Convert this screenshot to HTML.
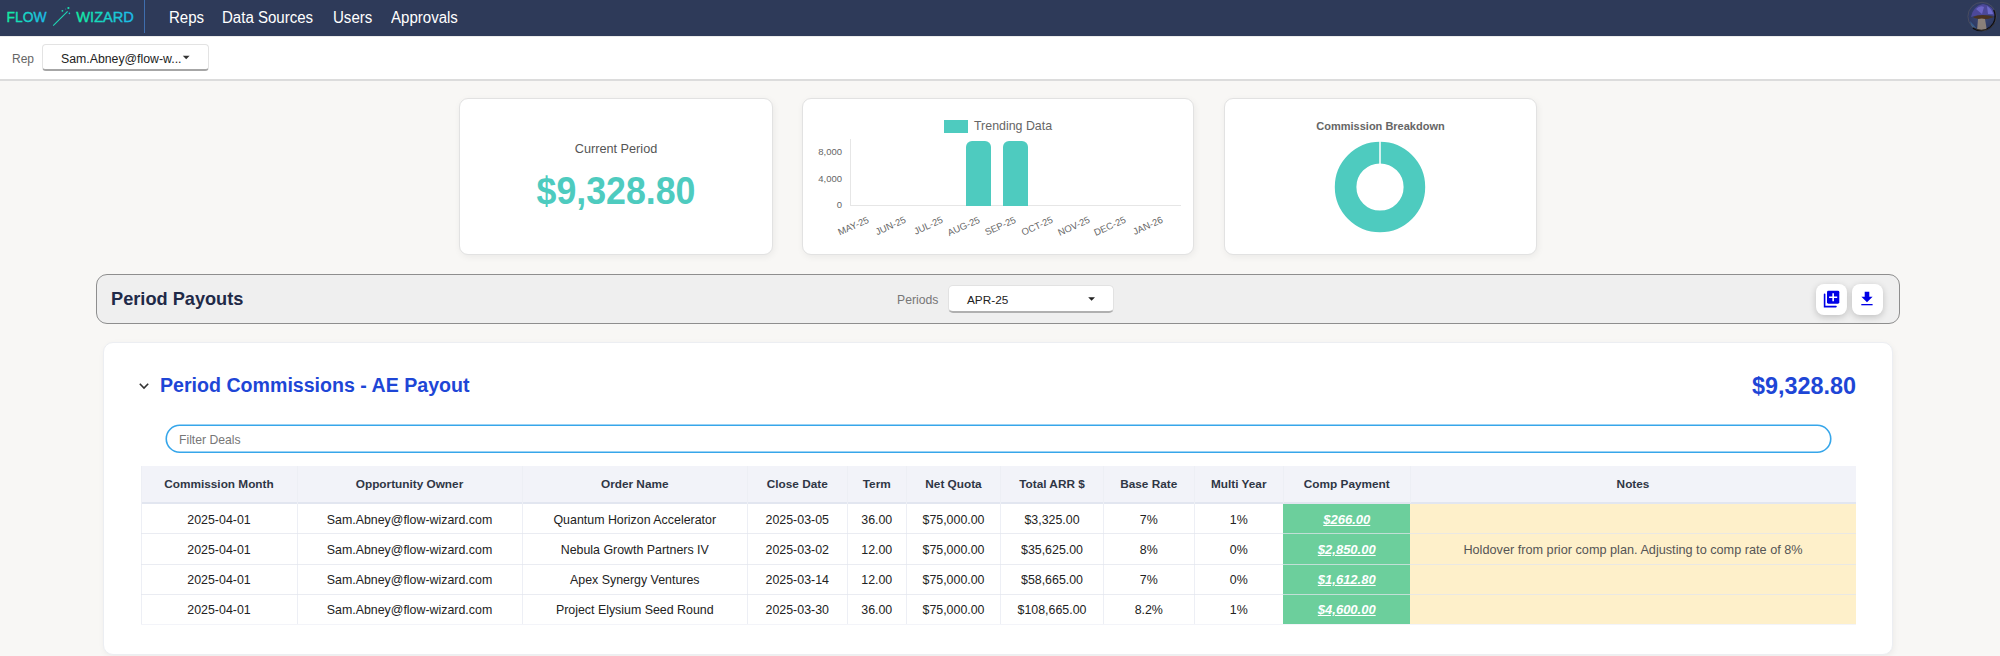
<!DOCTYPE html>
<html><head><meta charset="utf-8">
<style>
*{box-sizing:border-box;margin:0;padding:0}
html,body{width:2000px;height:656px;overflow:hidden}
body{background:#f8f7f5;font-family:"Liberation Sans",sans-serif;position:relative;color:#222}
.abs{position:absolute;white-space:nowrap}
#nav{position:absolute;left:0;top:0;width:2000px;height:36px;background:#2e3a59}
.logo{position:absolute;top:9px;font-size:14.5px;letter-spacing:0.2px;background:linear-gradient(90deg,#16eaa0,#1cb4ec);-webkit-background-clip:text;background-clip:text;color:transparent;line-height:16px}
.navlink{position:absolute;top:9px;font-size:16px;color:#fff;line-height:18px;transform:scaleX(.94);transform-origin:0 0}
#sub{position:absolute;left:0;top:36px;width:2000px;height:45px;background:#fff;border-bottom:2px solid #dcdcdc}
.card{position:absolute;background:#fff;border:1px solid #e2e2e2;border-radius:9px;box-shadow:1px 2px 7px rgba(0,0,0,.06)}
.th{top:477px;text-align:center;font-size:11.8px;font-weight:bold;color:#2f3645;line-height:14px}
.td{text-align:center;font-size:12.4px;color:#222;line-height:14px}
.pay{color:#fff;font-weight:bold;font-style:italic;text-decoration:underline;font-size:13px}
.note{color:#555;font-size:12.7px}
</style></head><body>
<div id="nav">
  <svg class="abs" style="left:0;top:0" width="145" height="36" viewBox="0 0 145 36">
    <defs>
      <linearGradient id="lg1" gradientUnits="userSpaceOnUse" x1="7" y1="0" x2="47" y2="0"><stop offset="0" stop-color="#12eea0"/><stop offset="1" stop-color="#1cb8f0"/></linearGradient>
      <linearGradient id="lg2" gradientUnits="userSpaceOnUse" x1="76" y1="0" x2="134" y2="0"><stop offset="0" stop-color="#12eea0"/><stop offset="1" stop-color="#1cb8f0"/></linearGradient>
    </defs>
    <text x="6.6" y="21.8" font-family="Liberation Sans" font-size="14.6" fill="url(#lg1)" stroke="url(#lg1)" stroke-width="0.35" textLength="40" lengthAdjust="spacingAndGlyphs">FLOW</text>
    <text x="76.3" y="21.8" font-family="Liberation Sans" font-size="14.6" fill="url(#lg2)" stroke="url(#lg2)" stroke-width="0.35" textLength="57.6" lengthAdjust="spacingAndGlyphs">WIZARD</text>
  </svg>
  <svg class="abs" style="left:50px;top:5px" width="24" height="24" viewBox="0 0 24 24">
    <line x1="3.2" y1="20.6" x2="17.6" y2="6.4" stroke="#1fd8b4" stroke-width="1.1"/>
    <circle cx="12.4" cy="5.8" r="0.9" fill="#1de0b0"/>
    <circle cx="18.4" cy="3" r="1.1" fill="#1de0b0"/>
    <circle cx="19.4" cy="8.4" r="0.8" fill="#1cc4d8"/>
    <circle cx="15.6" cy="4" r="0.6" fill="#3a7a9a"/>
  </svg>
  <div class="abs" style="left:144px;top:0;width:1px;height:33px;background:#3f6eae"></div>
  <div class="navlink" style="left:169px">Reps</div>
  <div class="navlink" style="left:222px">Data Sources</div>
  <div class="navlink" style="left:333px">Users</div>
  <div class="navlink" style="left:391px">Approvals</div>
  <svg class="abs" style="left:1966px;top:1px" width="32" height="32" viewBox="0 0 32 32">
  <defs><clipPath id="avc"><circle cx="16" cy="15.4" r="14.3"/></clipPath>
  <radialGradient id="avg" cx="50%" cy="45%" r="60%"><stop offset="0" stop-color="#3e4a78"/><stop offset="1" stop-color="#263258"/></radialGradient></defs>
  <g clip-path="url(#avc)">
    <rect x="0" y="0" width="32" height="32" fill="url(#avg)"/>
    <path d="M5 16 Q7 5 17 3 Q27 4 29 15 Q22 13 16 14 Q10 14 5 16Z" fill="#4c4898"/>
    <path d="M10 8 Q14 4 18 6 L16 13Z" fill="#7a72d8" opacity=".7"/>
    <path d="M21 5 Q26 8 27 13 L22 13Z" fill="#7a7ae0" opacity=".7"/>
    <path d="M7 16 Q16 12 28 16 Q20 19 16 18 Q10 18 7 16Z" fill="#4a3320"/>
    <path d="M12 18 Q16 17 19 18 L21 30 L11 30Z" fill="#9a8c7c" opacity=".85"/>
    <path d="M4 20 Q8 24 11 28 L6 28Z" fill="#3c6a9a" opacity=".7"/>
  </g>
  <path d="M28 9 A14.3 14.3 0 0 1 7 27" fill="none" stroke="#0a0a10" stroke-width="1.6"/>
  <circle cx="16" cy="15.4" r="14.1" fill="none" stroke="#8a7a5a" stroke-width=".5" opacity=".6"/>
</svg>
</div>
<div id="sub">
  <div class="abs" style="left:0;top:0;width:2000px;height:1px;background:#ececec"></div>
  <div class="abs" style="left:12px;top:16px;font-size:12px;color:#666">Rep</div>
  <div class="abs" style="left:42px;top:8px;width:167px;height:27px;border:1px solid #e3e3e3;border-bottom:2px solid #a6a6a6;border-radius:4px;background:#fff"></div>
  <div class="abs" style="left:61px;top:16px;font-size:12.3px;color:#222">Sam.Abney@flow-w...</div>
  <svg class="abs" style="left:182px;top:18px" width="10" height="7" viewBox="0 0 10 7"><path d="M0.8 1.8 H7.6 L4.2 5.2 Z" fill="#333"/></svg>
</div>

<!-- cards -->
<div class="card" style="left:459px;top:98px;width:314px;height:157px"></div>
<div class="abs" style="left:459px;top:141px;width:314px;text-align:center;font-size:12.7px;color:#555;line-height:16px">Current Period</div>
<div class="abs" style="left:459px;top:169px;width:314px;text-align:center;font-size:38px;font-weight:bold;color:#4ecbbf;line-height:44px;transform:scaleX(.94)">$9,328.80</div>

<div class="card" style="left:802px;top:98px;width:392px;height:157px"></div>
<div class="abs" style="left:944px;top:119.5px;width:24px;height:13px;background:#4ecbbf"></div>
<div class="abs" style="left:974px;top:119px;font-size:12.4px;color:#666;line-height:15px">Trending Data</div>
<div class="abs" style="left:850px;top:139px;width:1px;height:67px;background:#e6e6e6"></div>
<div class="abs" style="left:850px;top:205px;width:331px;height:1px;background:#e6e6e6"></div>
<div class="abs" style="left:800px;top:146px;width:42px;text-align:right;font-size:9.5px;color:#666;line-height:12px">8,000</div>
<div class="abs" style="left:800px;top:173px;width:42px;text-align:right;font-size:9.5px;color:#666;line-height:12px">4,000</div>
<div class="abs" style="left:800px;top:199px;width:42px;text-align:right;font-size:9.5px;color:#666;line-height:12px">0</div>
<div class="abs" style="left:966px;top:141px;width:25px;height:65px;background:#4ecbbf;border-radius:6px 6px 0 0"></div>
<div class="abs" style="left:1003px;top:140.5px;width:25px;height:65.5px;background:#4ecbbf;border-radius:6px 6px 0 0"></div>
<div class="abs" style="left:806.4px;top:214px;width:60px;text-align:right;font-size:9.5px;color:#666;line-height:11px;transform:rotate(-24deg);transform-origin:100% 0">MAY-25</div>
<div class="abs" style="left:843.0px;top:214px;width:60px;text-align:right;font-size:9.5px;color:#666;line-height:11px;transform:rotate(-24deg);transform-origin:100% 0">JUN-25</div>
<div class="abs" style="left:879.8px;top:214px;width:60px;text-align:right;font-size:9.5px;color:#666;line-height:11px;transform:rotate(-24deg);transform-origin:100% 0">JUL-25</div>
<div class="abs" style="left:916.5px;top:214px;width:60px;text-align:right;font-size:9.5px;color:#666;line-height:11px;transform:rotate(-24deg);transform-origin:100% 0">AUG-25</div>
<div class="abs" style="left:953.1px;top:214px;width:60px;text-align:right;font-size:9.5px;color:#666;line-height:11px;transform:rotate(-24deg);transform-origin:100% 0">SEP-25</div>
<div class="abs" style="left:989.8px;top:214px;width:60px;text-align:right;font-size:9.5px;color:#666;line-height:11px;transform:rotate(-24deg);transform-origin:100% 0">OCT-25</div>
<div class="abs" style="left:1026.5px;top:214px;width:60px;text-align:right;font-size:9.5px;color:#666;line-height:11px;transform:rotate(-24deg);transform-origin:100% 0">NOV-25</div>
<div class="abs" style="left:1063.2px;top:214px;width:60px;text-align:right;font-size:9.5px;color:#666;line-height:11px;transform:rotate(-24deg);transform-origin:100% 0">DEC-25</div>
<div class="abs" style="left:1100.0px;top:214px;width:60px;text-align:right;font-size:9.5px;color:#666;line-height:11px;transform:rotate(-24deg);transform-origin:100% 0">JAN-26</div>

<div class="card" style="left:1224px;top:98px;width:313px;height:157px"></div>
<div class="abs" style="left:1224px;top:119px;width:313px;text-align:center;font-size:11px;font-weight:bold;color:#666;line-height:14px">Commission Breakdown</div>
<svg class="abs" style="left:1334px;top:141px" width="92" height="92" viewBox="0 0 92 92">
  <circle cx="46" cy="46" r="34.4" fill="none" stroke="#4ecbbf" stroke-width="21.6"/>
  <line x1="46" y1="0" x2="46" y2="23" stroke="#fff" stroke-width="1.5"/>
</svg>


<!-- period payouts bar -->
<div class="abs" style="left:96px;top:274px;width:1804px;height:50px;background:#efefef;border:1px solid #8e8e8e;border-radius:11px"></div>
<div class="abs" style="left:111px;top:289px;font-size:18.2px;font-weight:bold;color:#1f2a48;line-height:21px">Period Payouts</div>
<div class="abs" style="left:897px;top:293px;font-size:12.2px;color:#777;line-height:14px">Periods</div>
<div class="abs" style="left:948px;top:285px;width:166px;height:28px;background:#fff;border:1px solid #e2e2e2;border-bottom:2px solid #b0b0b0;border-radius:5px"></div>
<div class="abs" style="left:967px;top:293px;font-size:11.8px;color:#222;line-height:14px">APR-25</div>
<svg class="abs" style="left:1087px;top:296px" width="10" height="7" viewBox="0 0 10 7"><path d="M1.2 1.2 H8 L4.6 4.8 Z" fill="#222"/></svg>
<div class="abs" style="left:1816px;top:284px;width:31px;height:31px;background:#fff;border-radius:8px;box-shadow:0 2px 7px rgba(0,0,0,.2)"></div>
<div class="abs" style="left:1852px;top:284px;width:31px;height:31px;background:#fff;border-radius:8px;box-shadow:0 2px 7px rgba(0,0,0,.2)"></div>
<svg class="abs" style="left:1816px;top:284px" width="31" height="31" viewBox="0 0 31 31">
  <path d="M8.6 10.2 V22.6 H20" fill="none" stroke="#0000e6" stroke-width="1.6" stroke-linecap="round"/>
  <rect x="11" y="6.8" width="12.3" height="12.9" rx="1.4" fill="#0000e6"/>
  <path d="M17.15 9.2 V17.3 M13.1 13.25 H21.2" stroke="#fff" stroke-width="1.6"/>
</svg>
<svg class="abs" style="left:1852px;top:284px" width="31" height="31" viewBox="0 0 31 31">
  <path d="M12.7 7.8 H17.3 V12.8 H20.6 L15 18.3 L9.4 12.8 H12.7 Z" fill="#0000e6"/>
  <rect x="9.3" y="20" width="11.3" height="1.3" fill="#0000e6"/>
</svg>

<!-- commission card -->
<div class="abs" style="left:103px;top:342px;width:1790px;height:313px;background:#fff;border:1px solid #eceef2;border-radius:10px;box-shadow:1px 2px 6px rgba(0,0,0,.05)"></div>
<svg class="abs" style="left:138px;top:382px" width="12" height="8" viewBox="0 0 12 8">
  <path d="M1.8 1.8 L6 6 L10.2 1.8" fill="none" stroke="#333" stroke-width="1.6"/>
</svg>
<div class="abs" style="left:160px;top:374px;font-size:19.6px;font-weight:bold;color:#1e46d6;line-height:22px">Period Commissions - AE Payout</div>
<div class="abs" style="left:1556px;top:373px;width:300px;text-align:right;font-size:23.4px;font-weight:bold;color:#1e46d6;line-height:26px">$9,328.80</div>
<svg class="abs" style="left:165px;top:424px" width="1667" height="30" viewBox="0 0 1667 30"><rect x="1.25" y="1.25" width="1664.5" height="27" rx="13.5" fill="#fff" stroke="#36a6ea" stroke-width="1.6"/></svg>
<div class="abs" style="left:179px;top:433px;font-size:12.2px;color:#777;line-height:14px">Filter Deals</div>
<div class="abs" style="left:141px;top:466px;width:1715px;height:38px;background:#f2f3f9;border-bottom:2px solid #e2e6f0"></div>
<div class="abs" style="left:140.5px;top:466px;width:1px;height:158px;background:#edeff5"></div>
<div class="abs" style="left:296.5px;top:466px;width:1px;height:158px;background:#edeff5"></div>
<div class="abs" style="left:521.5px;top:466px;width:1px;height:158px;background:#edeff5"></div>
<div class="abs" style="left:747.0px;top:466px;width:1px;height:158px;background:#edeff5"></div>
<div class="abs" style="left:846.5px;top:466px;width:1px;height:158px;background:#edeff5"></div>
<div class="abs" style="left:906.0px;top:466px;width:1px;height:158px;background:#edeff5"></div>
<div class="abs" style="left:1000.0px;top:466px;width:1px;height:158px;background:#edeff5"></div>
<div class="abs" style="left:1103.0px;top:466px;width:1px;height:158px;background:#edeff5"></div>
<div class="abs" style="left:1193.5px;top:466px;width:1px;height:158px;background:#edeff5"></div>
<div class="abs" style="left:1283.0px;top:466px;width:1px;height:37px;background:#edeff5"></div>
<div class="abs" style="left:1409.5px;top:466px;width:1px;height:37px;background:#edeff5"></div>
<div class="abs" style="left:1283px;top:504px;width:127px;height:120px;background:#6ccf9c"></div>
<div class="abs" style="left:1410px;top:504px;width:446px;height:120px;background:#fef0ca"></div>
<div class="abs" style="left:141px;top:533px;width:1715px;height:1px;background:rgba(226,229,237,.72)"></div>
<div class="abs" style="left:141px;top:564px;width:1715px;height:1px;background:rgba(226,229,237,.72)"></div>
<div class="abs" style="left:141px;top:594px;width:1715px;height:1px;background:rgba(226,229,237,.72)"></div>
<div class="abs" style="left:141px;top:624px;width:1715px;height:1px;background:#f3f4f9"></div>
<div class="abs th" style="left:141px;width:156px">Commission Month</div>
<div class="abs th" style="left:297px;width:225px">Opportunity Owner</div>
<div class="abs th" style="left:522px;width:225.5px">Order Name</div>
<div class="abs th" style="left:747.5px;width:99.5px">Close Date</div>
<div class="abs th" style="left:847px;width:59.5px">Term</div>
<div class="abs th" style="left:906.5px;width:94.0px">Net Quota</div>
<div class="abs th" style="left:1000.5px;width:103.0px">Total ARR $</div>
<div class="abs th" style="left:1103.5px;width:90.5px">Base Rate</div>
<div class="abs th" style="left:1194px;width:89.5px">Multi Year</div>
<div class="abs th" style="left:1283.5px;width:126.5px">Comp Payment</div>
<div class="abs th" style="left:1410px;width:446px">Notes</div>
<div class="abs td" style="left:141px;top:513px;width:156px">2025-04-01</div>
<div class="abs td" style="left:297px;top:513px;width:225px">Sam.Abney@flow-wizard.com</div>
<div class="abs td" style="left:522px;top:513px;width:225.5px">Quantum Horizon Accelerator</div>
<div class="abs td" style="left:747.5px;top:513px;width:99.5px">2025-03-05</div>
<div class="abs td" style="left:847px;top:513px;width:59.5px">36.00</div>
<div class="abs td" style="left:906.5px;top:513px;width:94.0px">$75,000.00</div>
<div class="abs td" style="left:1000.5px;top:513px;width:103.0px">$3,325.00</div>
<div class="abs td" style="left:1103.5px;top:513px;width:90.5px">7%</div>
<div class="abs td" style="left:1194px;top:513px;width:89.5px">1%</div>
<div class="abs td pay" style="left:1283.5px;top:513px;width:126.5px">$266.00</div>
<div class="abs td" style="left:141px;top:543px;width:156px">2025-04-01</div>
<div class="abs td" style="left:297px;top:543px;width:225px">Sam.Abney@flow-wizard.com</div>
<div class="abs td" style="left:522px;top:543px;width:225.5px">Nebula Growth Partners IV</div>
<div class="abs td" style="left:747.5px;top:543px;width:99.5px">2025-03-02</div>
<div class="abs td" style="left:847px;top:543px;width:59.5px">12.00</div>
<div class="abs td" style="left:906.5px;top:543px;width:94.0px">$75,000.00</div>
<div class="abs td" style="left:1000.5px;top:543px;width:103.0px">$35,625.00</div>
<div class="abs td" style="left:1103.5px;top:543px;width:90.5px">8%</div>
<div class="abs td" style="left:1194px;top:543px;width:89.5px">0%</div>
<div class="abs td pay" style="left:1283.5px;top:543px;width:126.5px">$2,850.00</div>
<div class="abs td note" style="left:1410px;top:543px;width:446px">Holdover from prior comp plan. Adjusting to comp rate of 8%</div>
<div class="abs td" style="left:141px;top:573px;width:156px">2025-04-01</div>
<div class="abs td" style="left:297px;top:573px;width:225px">Sam.Abney@flow-wizard.com</div>
<div class="abs td" style="left:522px;top:573px;width:225.5px">Apex Synergy Ventures</div>
<div class="abs td" style="left:747.5px;top:573px;width:99.5px">2025-03-14</div>
<div class="abs td" style="left:847px;top:573px;width:59.5px">12.00</div>
<div class="abs td" style="left:906.5px;top:573px;width:94.0px">$75,000.00</div>
<div class="abs td" style="left:1000.5px;top:573px;width:103.0px">$58,665.00</div>
<div class="abs td" style="left:1103.5px;top:573px;width:90.5px">7%</div>
<div class="abs td" style="left:1194px;top:573px;width:89.5px">0%</div>
<div class="abs td pay" style="left:1283.5px;top:573px;width:126.5px">$1,612.80</div>
<div class="abs td" style="left:141px;top:603px;width:156px">2025-04-01</div>
<div class="abs td" style="left:297px;top:603px;width:225px">Sam.Abney@flow-wizard.com</div>
<div class="abs td" style="left:522px;top:603px;width:225.5px">Project Elysium Seed Round</div>
<div class="abs td" style="left:747.5px;top:603px;width:99.5px">2025-03-30</div>
<div class="abs td" style="left:847px;top:603px;width:59.5px">36.00</div>
<div class="abs td" style="left:906.5px;top:603px;width:94.0px">$75,000.00</div>
<div class="abs td" style="left:1000.5px;top:603px;width:103.0px">$108,665.00</div>
<div class="abs td" style="left:1103.5px;top:603px;width:90.5px">8.2%</div>
<div class="abs td" style="left:1194px;top:603px;width:89.5px">1%</div>
<div class="abs td pay" style="left:1283.5px;top:603px;width:126.5px">$4,600.00</div>
</body></html>
